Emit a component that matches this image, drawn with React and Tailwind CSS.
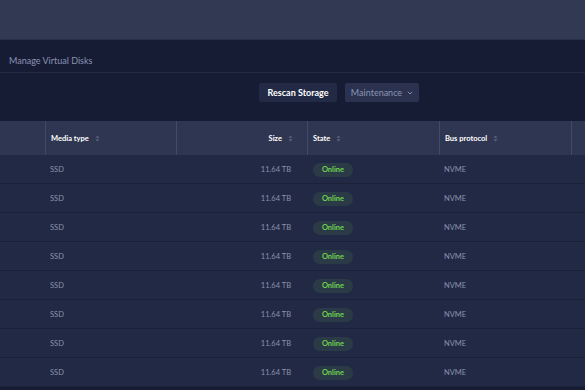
const rows = Array.from({ length: 8 }, (_, i) => ({
  id: i,
  media: "SSD",
  size: "11.64 TB",
  state: "Online",
  bus: "NVME",
}));

const SortIcon = () => (
  <svg width="5" height="7" viewBox="0 0 5 7" className="ml-[6px] shrink-0">
    <path d="M2.5 0.5 L4.5 2.8 H0.5 Z" fill="#5d6584" />
    <path d="M2.5 6.5 L4.5 4.2 H0.5 Z" fill="#5d6584" />
  </svg>
);

const App = () => {
  return (
    <div
      className="w-[585px] h-[390px] overflow-hidden bg-[#171c35] flex flex-col"
      style={{ fontFamily: "Lato, 'Open Sans', sans-serif" }}
    >
      <div className="h-[40px] shrink-0 bg-[#323952] border-b border-[#2a3048]" />

      <div className="h-[33px] shrink-0 flex items-center pt-[9px] px-[9px] border-b border-[#262c45]">
        <span className="text-[9px] text-[#8a93b3]">Manage Virtual Disks</span>
      </div>

      <div className="h-[48px] shrink-0 flex items-start pt-[10px] pl-[259px] gap-[8px]">
        <button className="h-[19px] w-[78px] rounded-[2px] bg-[#222a45] text-[9px] font-bold text-white">
          Rescan Storage
        </button>
        <button className="h-[19px] w-[74px] rounded-[2px] bg-[#2a324f] text-[9px] text-[#8c95b5] flex items-center justify-center gap-[5px]">
          Maintenance
          <svg width="6" height="4" viewBox="0 0 6 4">
            <path d="M0.8 0.8 L3 3 L5.2 0.8" stroke="#8c95b5" strokeWidth="0.9" fill="none" />
          </svg>
        </button>
      </div>

      <div className="grid grid-cols-[45px_131px_131px_132px_132px_1fr] h-[34px] shrink-0 bg-[#2f3651] text-[7.5px] font-bold text-white">
        <div />
        <div className="border-l border-[#424a68] flex items-center pl-[5px] pt-[1px]">
          Media type
          <SortIcon />
        </div>
        <div className="border-l border-[#424a68] flex items-center justify-end pr-[14px] pt-[1px]">
          Size
          <SortIcon />
        </div>
        <div className="border-l border-[#424a68] flex items-center pl-[5px] pt-[1px]">
          State
          <SortIcon />
        </div>
        <div className="border-l border-[#424a68] flex items-center pl-[5px] pt-[1px]">
          Bus protocol
          <SortIcon />
        </div>
        <div className="border-l border-[#424a68]" />
      </div>

      {rows.map((row) => (
        <div
          key={row.id}
          className="grid grid-cols-[45px_131px_131px_132px_132px_1fr] h-[29px] shrink-0 bg-[#222944] border-b border-[#1c2139] text-[7.5px] text-[#8a93ad] pt-[2px]"
        >
          <div />
          <div className="flex items-center pl-[5px]">{row.media}</div>
          <div className="flex items-center justify-end pr-[16px]">{row.size}</div>
          <div className="flex items-center pl-[6px]">
            <span className="h-[14px] w-[40px] rounded-[7px] bg-[#2a3a46] text-[#6fd14e] font-bold flex items-center justify-center">
              {row.state}
            </span>
          </div>
          <div className="flex items-center pl-[5px]">{row.bus}</div>
          <div />
        </div>
      ))}
    </div>
  );
};

export default App;
